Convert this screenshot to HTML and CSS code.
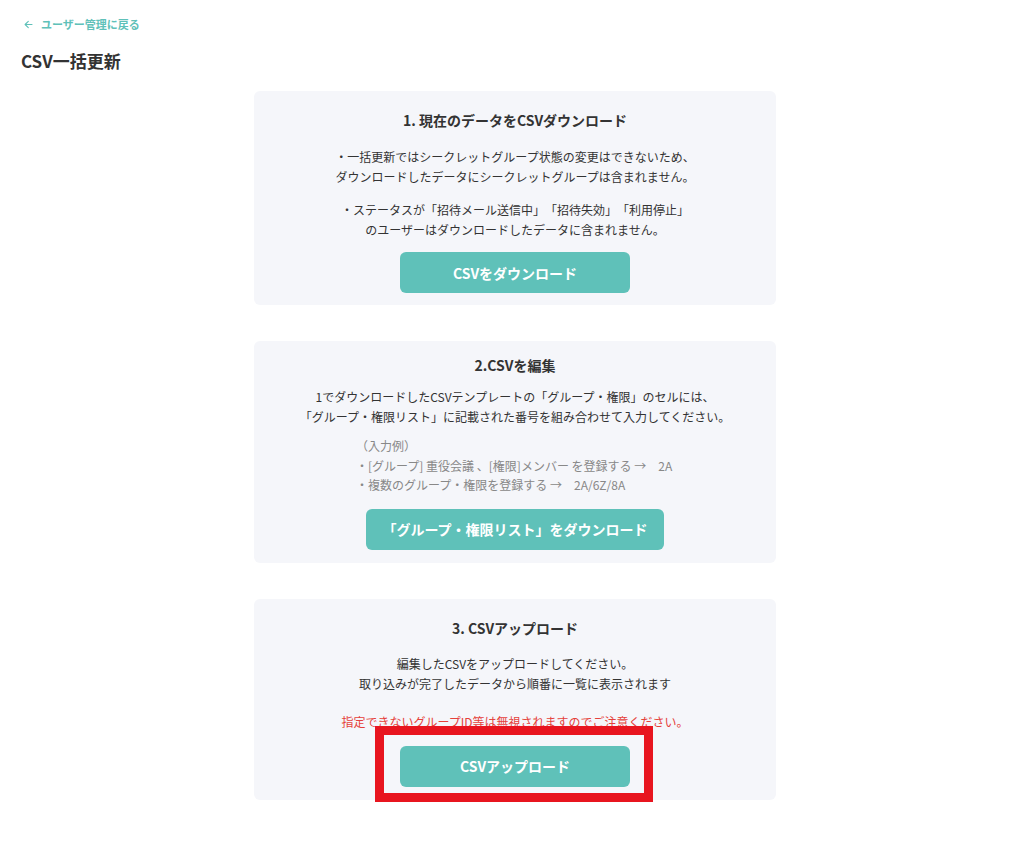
FILE: index.html
```html
<!DOCTYPE html>
<html lang="ja">
<head>
<meta charset="utf-8">
<title>CSV一括更新</title>
<link rel="stylesheet" href="styles.css">
</head>
<body>
<div class="page">
  <a class="back" href="#">
    <svg class="back-icon" width="9" height="9" viewBox="0 0 9 9"><path d="M8 4.5H1.2M4.3 1.3L1.1 4.5l3.2 3.2" fill="none" stroke="#5fc1b9" stroke-width="1.1" stroke-linecap="round" stroke-linejoin="round"/></svg>
    <span>ユーザー管理に戻る</span>
  </a>
  <h1 class="page-title">CSV一括更新</h1>

  <div class="steps">
    <section class="card card-1">
      <h2 class="card-title">1. 現在のデータをCSVダウンロード</h2>
      <p class="text">・一括更新ではシークレットグループ状態の変更はできないため、<br>ダウンロードしたデータにシークレットグループは含まれません。</p>
      <p class="text text-2">・ステータスが「招待メール送信中」「招待失効」「利用停止」<br>のユーザーはダウンロードしたデータに含まれません。</p>
      <button class="btn btn-narrow">CSVをダウンロード</button>
    </section>

    <section class="card card-2">
      <h2 class="card-title">2.CSVを編集</h2>
      <p class="text">1でダウンロードしたCSVテンプレートの「グループ・権限」のセルには、<br>「グループ・権限リスト」に記載された番号を組み合わせて入力してください。</p>
      <div class="example">
        <div>（入力例）</div>
        <div>・[グループ] 重役会議 、[権限]メンバー を登録する →　2A</div>
        <div>・複数のグループ・権限を登録する →　2A/6Z/8A</div>
      </div>
      <button class="btn btn-wide">「グループ・権限リスト」をダウンロード</button>
    </section>

    <section class="card card-3">
      <h2 class="card-title">3. CSVアップロード</h2>
      <p class="text">編集したCSVをアップロードしてください。<br>取り込みが完了したデータから順番に一覧に表示されます</p>
      <p class="warning">指定できないグループID等は無視されますのでご注意ください。</p>
      <button class="btn btn-narrow">CSVアップロード</button>
      <div class="highlight"></div>
    </section>
  </div>
</div>
</body>
</html>
```

FILE: styles.css
```css
* { box-sizing: border-box; }
html, body { margin: 0; padding: 0; background: #fff; }
body {
  font-family: "Noto Sans CJK JP", "Noto Sans", sans-serif;
  color: #333;
  text-spacing-trim: space-all;
}
.page {
  padding: 15px 21px 40px;
}
.back {
  display: flex;
  align-items: center;
  gap: 8px;
  margin-left: 3px;
  height: 18px;
  color: #5fc1b9;
  font-size: 11px;
  font-weight: 700;
  text-decoration: none;
}
.back-icon { display: block; }
.page-title {
  margin: 16px 0 0;
  font-size: 17px;
  line-height: 24px;
  font-weight: 700;
  color: #333;
}
.steps {
  margin: 18px 0 0 233px;
  width: 522px;
  display: flex;
  flex-direction: column;
  gap: 36px;
}
.card {
  position: relative;
  background: #f5f6fa;
  border-radius: 6px;
  display: flex;
  flex-direction: column;
  align-items: center;
  padding: 19px 20px 12px;
}
.card-2 { padding-top: 14px; padding-bottom: 13px; }
.card-3 { padding-top: 19px; padding-bottom: 13px; }
.card-title {
  margin: 0;
  font-size: 14px;
  line-height: 20px;
  font-weight: 700;
  color: #333;
}
.text {
  margin: 17px 0 0;
  font-size: 12px;
  line-height: 20px;
  text-align: center;
  color: #333;
}
.card-2 .text { margin-top: 12px; }
.card-3 .text { margin-top: 16px; }
.text-2 { margin-top: 13px; }
.example {
  align-self: flex-start;
  margin: 9px 0 0 82px;
  font-size: 12px;
  line-height: 19.5px;
  color: #888;
}
.warning {
  margin: 18px 0 0;
  font-size: 12px;
  line-height: 20px;
  color: #e5413b;
}
.btn {
  display: block;
  height: 41px;
  border: none;
  border-radius: 6px;
  background: #5fc1b9;
  color: #fff;
  font-family: "Noto Sans CJK JP", "Noto Sans", sans-serif;
  font-size: 14px;
  font-weight: 700;
  cursor: pointer;
}
.btn-narrow { width: 230px; margin-top: 12px; }
.card-3 .btn-narrow { margin-top: 14px; }
.btn-wide { width: 298px; margin-top: 14px; }
.highlight {
  position: absolute;
  left: 121px;
  top: 127px;
  width: 278px;
  height: 76px;
  border: 9px solid #e8151f;
  pointer-events: none;
}
```
